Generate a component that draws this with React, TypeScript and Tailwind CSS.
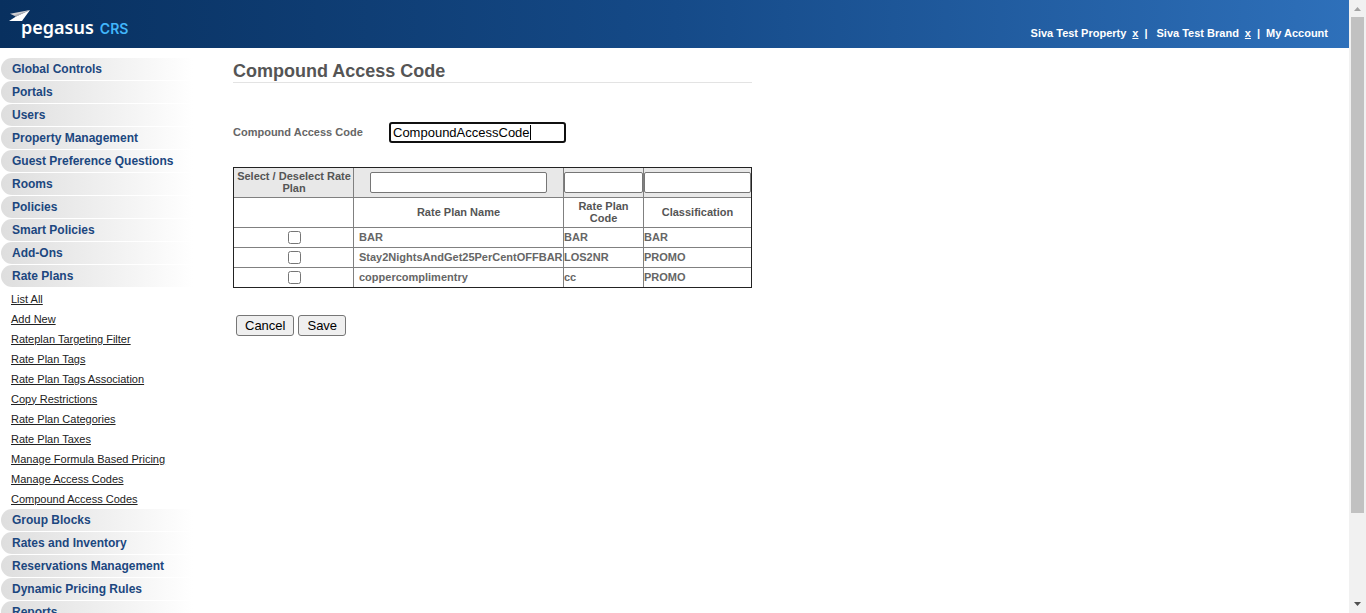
import { useState } from "react";

const menuBefore = [
  "Global Controls",
  "Portals",
  "Users",
  "Property Management",
  "Guest Preference Questions",
  "Rooms",
  "Policies",
  "Smart Policies",
  "Add-Ons",
  "Rate Plans",
];

const ratePlanLinks = [
  "List All",
  "Add New",
  "Rateplan Targeting Filter",
  "Rate Plan Tags",
  "Rate Plan Tags Association",
  "Copy Restrictions",
  "Rate Plan Categories",
  "Rate Plan Taxes",
  "Manage Formula Based Pricing",
  "Manage Access Codes",
  "Compound Access Codes",
];

const menuAfter = [
  "Group Blocks",
  "Rates and Inventory",
  "Reservations Management",
  "Dynamic Pricing Rules",
  "Reports",
];

const plans = [
  { name: "BAR", code: "BAR", type: "BAR" },
  { name: "Stay2NightsAndGet25PerCentOFFBAR", code: "LOS2NR", type: "PROMO" },
  { name: "coppercomplimentry", code: "cc", type: "PROMO" },
];

function Logo() {
  return (
    <a href="#" aria-label="Pegasus CRS" className="flex items-start pl-2 pt-2">
      <svg width="23" height="15" viewBox="0 0 23 15" aria-hidden="true">
        <path d="M2 5.800 22 2 8 8.600Z" fill="#cfcfd2" />
        <path d="M22 2 14 13H1L8 8.600Z" fill="#fff" />
        <path d="M22 2 8 8.600 5.500 7.400Z" fill="#a9abb2" />
      </svg>
      <span className="-ml-[10px] flex items-baseline gap-1.5 pt-[7px] leading-6">
        <span className="font-['Noto_Sans',sans-serif] text-[18px] font-semibold text-white">pegasus</span>
        <span className="font-[Inter,sans-serif] text-[14px] font-semibold text-[#41b6fb]">CRS</span>
      </span>
    </a>
  );
}

function MenuItem({ label }: { label: string }) {
  return (
    <li>
      <a
        href="#"
        className="flex h-[22px] items-center rounded-l-full bg-linear-to-r from-[#dedede] to-white pl-[11px] text-[12px] font-bold text-[#1c477f]"
      >
        {label}
      </a>
    </li>
  );
}

function Sidebar() {
  return (
    <nav className="w-[193px] shrink-0 pl-px pt-[10px]">
      <ul className="flex flex-col gap-px">
        {menuBefore.map((m) => (
          <MenuItem key={m} label={m} />
        ))}
      </ul>
      <ul className="pl-[10px] pt-0.5">
        {ratePlanLinks.map((l) => (
          <li key={l} className="flex h-5 items-center text-[11px] text-[#222]">
            <a href="#" className="underline">
              {l}
            </a>
          </li>
        ))}
      </ul>
      <ul className="flex flex-col gap-px">
        {menuAfter.map((m) => (
          <MenuItem key={m} label={m} />
        ))}
      </ul>
    </nav>
  );
}

const cell = "border border-[#808080] p-0 pb-0.5";
const fieldCell = "border border-[#808080] p-0";
const filterInput =
  "block h-[21px] rounded-[2px] border border-[#767676] bg-white px-0.5 text-[13px] font-normal text-black";

function PlanTable() {
  return (
    <table className="w-[519px] table-fixed border-collapse border border-double border-[#222] text-[11px] leading-3 font-bold text-[#666]">
      <colgroup>
        <col className="w-[120px]" />
        <col className="w-[210px]" />
        <col className="w-[80px]" />
        <col />
      </colgroup>
      <thead className="text-[#555]">
        <tr className="h-[30px] bg-[#e8e8e8]">
          <th className={`${cell} pl-px`}>Select / Deselect Rate Plan</th>
          <th className={fieldCell}>
            <input aria-label="Filter by rate plan name" className={`${filterInput} mx-auto w-[177px]`} />
          </th>
          <th className={fieldCell}>
            <input aria-label="Filter by rate plan code" className={`${filterInput} w-full`} />
          </th>
          <th className={fieldCell}>
            <input aria-label="Filter by classification" className={`${filterInput} w-full`} />
          </th>
        </tr>
        <tr className="h-[30px]">
          <td className={cell} />
          <th className={cell}>Rate Plan Name</th>
          <th className={`${cell} px-3`}>Rate Plan Code</th>
          <th className={cell}>Classification</th>
        </tr>
      </thead>
      <tbody>
        {plans.map((p) => (
          <tr key={p.name} className="h-5">
            <td className={`${fieldCell} pl-0.5`}>
              <input
                type="checkbox"
                aria-label={`Select ${p.name}`}
                className="mx-auto block size-[13px]"
              />
            </td>
            <td className={`${cell} pl-[5px] whitespace-nowrap`}>{p.name}</td>
            <td className={cell}>{p.code}</td>
            <td className={cell}>{p.type}</td>
          </tr>
        ))}
      </tbody>
    </table>
  );
}

function ScrollRail() {
  return (
    <div aria-hidden="true" className="flex w-[17px] shrink-0 flex-col items-center bg-[#f1f1f1]">
      <svg width="17" height="17" viewBox="0 0 17 17">
        <path d="M5 11h7L8.500 7Z" fill="#a3a3a3" />
      </svg>
      <div className="w-[13px] grow-[496] bg-[#c1c1c1]" />
      <div className="grow-[83]" />
      <svg width="17" height="17" viewBox="0 0 17 17">
        <path d="M5 6h7L8.500 10Z" fill="#505050" />
      </svg>
    </div>
  );
}

export default function App() {
  const [code, setCode] = useState("CompoundAccessCode");
  const button =
    "h-[21px] rounded-[3px] border border-[#767676] bg-[#efefef] px-2 text-[13px] leading-4 text-black";
  return (
    <div className="flex h-screen overflow-hidden bg-white font-['Liberation_Sans',Arial,sans-serif]">
      <div className="min-w-0 flex-1 overflow-hidden">
        <header className="flex h-12 justify-between bg-linear-to-r from-[#08305f] via-[#154a88] to-[#2e70ba]">
          <Logo />
          <div className="flex gap-[6px] pr-[21px] pt-[27px] text-[11px] leading-3 font-bold text-white">
            <a href="#">Siva Test Property</a>
            <a href="#" className="underline">x</a>
            <span>|</span>
            <a href="#" className="pl-[3px]">Siva Test Brand</a>
            <a href="#" className="underline">x</a>
            <span>|</span>
            <a href="#">My Account</a>
          </div>
        </header>
        <div className="flex">
          <Sidebar />
          <main className="ml-10 w-[519px] pt-3">
            <h1 className="border-b border-[#e3e3e3] text-[18px] leading-[22px] font-bold text-[#555]">
              Compound Access Code
            </h1>
            <div className="flex items-center pt-[39px]">
              <label htmlFor="access-code" className="w-[156px] text-[11px] font-bold text-[#666]">
                Compound Access Code
              </label>
              <div className="relative">
                <input
                  id="access-code"
                  value={code}
                  onChange={(e) => setCode(e.target.value)}
                  className="block h-[21px] w-[177px] rounded-[3px] border-2 border-[#101010] bg-white px-0.5 text-[13px] text-black caret-transparent outline-none"
                />
                <span aria-hidden="true" className="pointer-events-none absolute inset-y-0 left-1 flex items-center text-[13px]">
                  <span className="invisible">{code}</span>
                  <span className="h-[15px] w-px bg-black" />
                </span>
              </div>
            </div>
            <div className="pt-6">
              <PlanTable />
            </div>
            <div className="flex gap-1 pl-[3px] pt-[27px]">
              <button type="button" className={button}>Cancel</button>
              <button type="button" className={button}>Save</button>
            </div>
          </main>
        </div>
      </div>
      <ScrollRail />
    </div>
  );
}
